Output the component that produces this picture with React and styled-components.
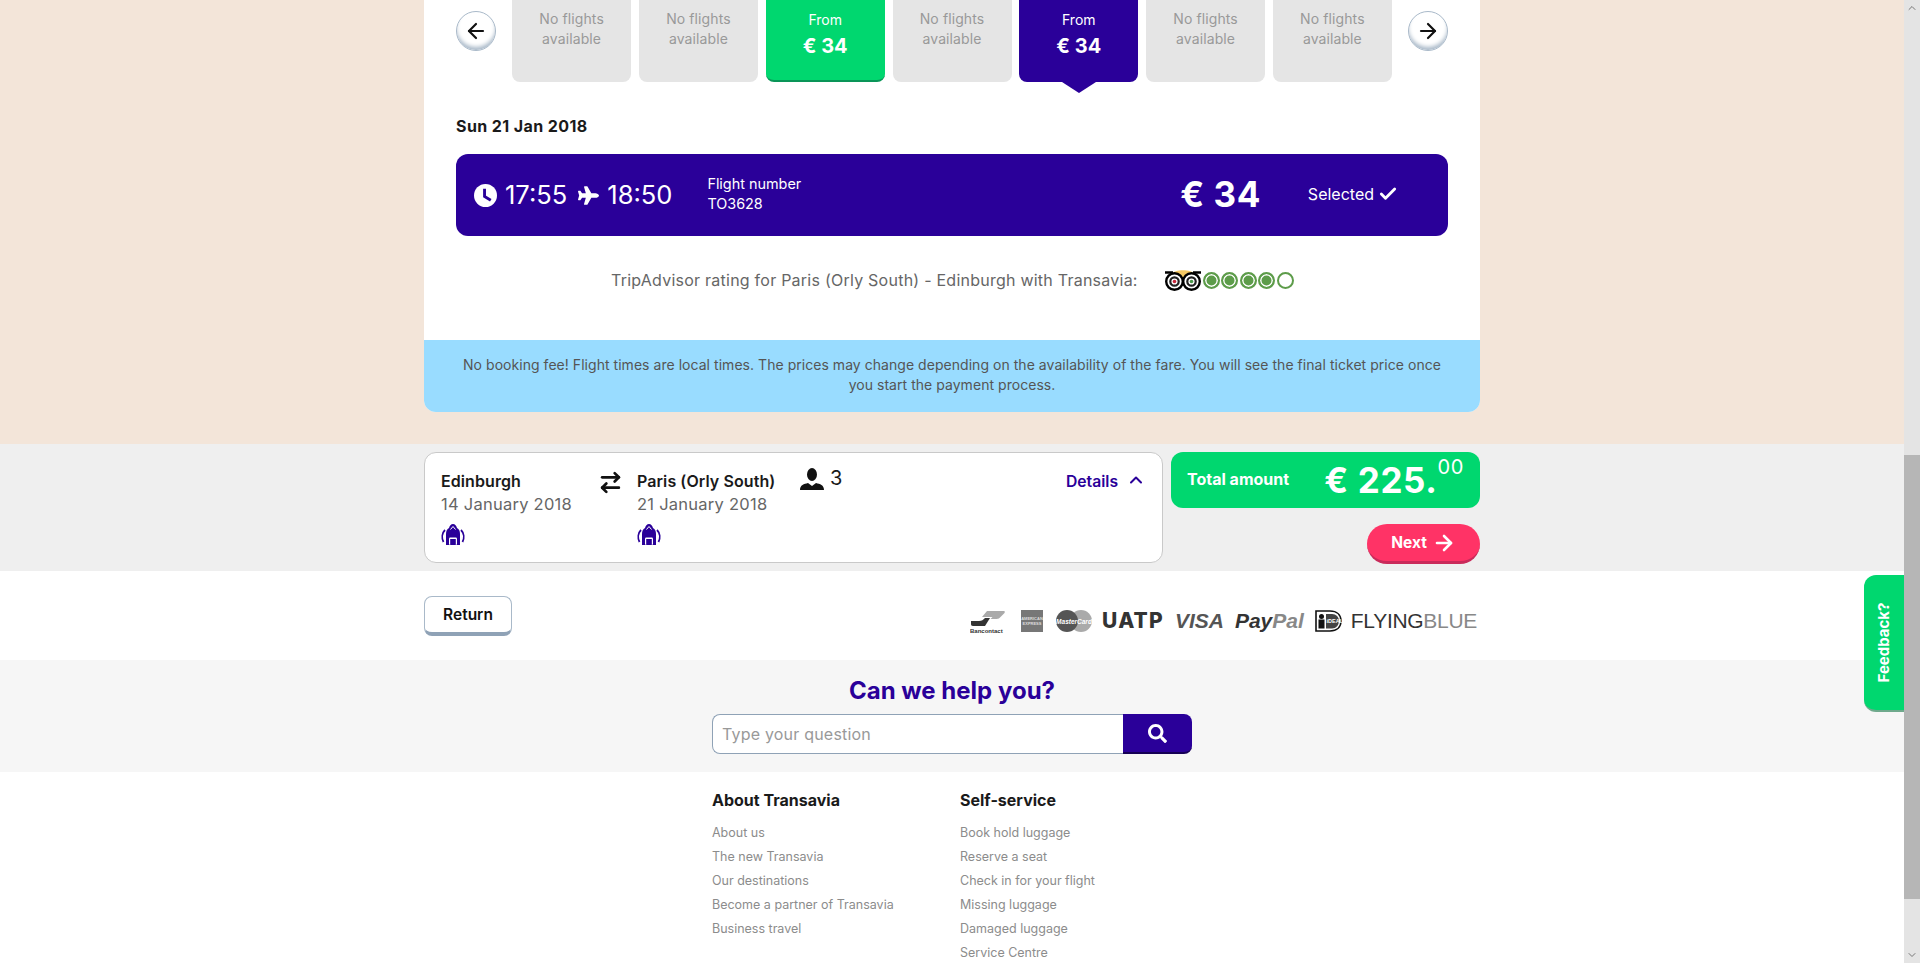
import React from "react";
import styled, { createGlobalStyle } from "styled-components";
import { ArrowLeft, ArrowRight, Check, ChevronUp, ArrowRightLeft, ChevronDown } from "lucide-react";
import { FaPlane, FaSearch } from "react-icons/fa";

const PURPLE = "#2a0099";
const GREEN = "#00d76f";
const FONT = `"Inter", "Open Sans", sans-serif`;

const GlobalStyle = createGlobalStyle`
  html, body { margin: 0; padding: 0; height: 963px; overflow: hidden; background: #fff; }
  body { font-family: ${FONT}; color: #1a1a1a; }
  * { box-sizing: border-box; }
`;

const Shell = styled.div`
  display: flex;
  height: 963px;
  position: relative;
  overflow: hidden;
`;
const Page = styled.div`
  flex: 1;
  min-width: 0;
  display: flex;
  flex-direction: column;
  & > section { flex-shrink: 0; }
`;
const ScrollBar = styled.div`
  width: 16px;
  background: #e4e4e4;
  display: flex;
  flex-direction: column;
  align-items: center;
  color: #777;
`;
const ScrollArrow = styled.div`
  height: 16px;
  display: flex;
  align-items: center;
  justify-content: center;
`;
const ScrollTrack = styled.div`
  flex: 1;
  width: 100%;
  padding: 439px 0 48px;
  display: flex;
`;
const ScrollThumb = styled.div`
  flex: 1;
  background: #b6b6b6;
`;

const BeigeBand = styled.section`
  height: 444px;
  background: #f3e5d9;
  display: flex;
  justify-content: center;
`;
const Card = styled.div`
  width: 1056px;
  height: 412px;
  background: #fff;
  border-radius: 0 0 12px 12px;
  display: flex;
  flex-direction: column;
`;
const CardBody = styled.div`
  flex: 1;
  padding: 0 32px;
  display: flex;
  flex-direction: column;
`;
const DateRow = styled.div`
  display: flex;
  justify-content: space-between;
  align-items: flex-start;
`;
const NavButton = styled.button`
  width: 40px;
  height: 40px;
  margin-top: 11px;
  padding: 0;
  border-radius: 50%;
  border: 1px solid #a9b9c9;
  background: #fff;
  box-shadow: inset 0 -4px 4px -1px #a7b7c7;
  color: #111;
  display: flex;
  align-items: center;
  justify-content: center;
`;
const Tabs = styled.div`
  display: flex;
  gap: 7.8px;
`;
const Tab = styled.div`
  position: relative;
  width: 119px;
  height: 82px;
  border-radius: 0 0 8px 8px;
  text-align: center;
  font-size: 14px;
  line-height: 20px;
  letter-spacing: ${(p) => (p.$kind === "none" ? "0.1px" : "0")};
  padding-top: ${(p) => (p.$kind === "none" ? "9px" : "10px")};
  background: ${(p) => (p.$kind === "none" ? "#e5e5e5" : p.$kind === "green" ? GREEN : PURPLE)};
  color: ${(p) => (p.$kind === "none" ? "#999" : "#fff")};
  border-bottom: ${(p) => (p.$kind === "green" ? "2px solid #0a9558" : "none")};
  &::after {
    content: "";
    display: ${(p) => (p.$kind === "purple" ? "block" : "none")};
    position: absolute;
    left: 50%;
    bottom: -11px;
    margin-left: -17px;
    border-left: 17px solid transparent;
    border-right: 17px solid transparent;
    border-top: 11px solid ${PURPLE};
  }
`;
const TabPrice = styled.div`
  font-size: 20px;
  font-weight: 700;
  line-height: 32px;
`;
const DayTitle = styled.div`
  margin-top: 34px;
  font-size: 16px;
  font-weight: 700;
  letter-spacing: 0.4px;
  line-height: 20px;
`;
const FlightBar = styled.div`
  margin-top: 18px;
  height: 82px;
  background: ${PURPLE};
  border-radius: 12px;
  color: #fff;
  display: flex;
  align-items: center;
  padding-left: 18px;
`;
const Time = styled.span`
  font-size: 25.5px;
  margin-top: -2px;
  margin-left: ${(p) => p.$gap}px;
`;
const PlaneWrap = styled.span`
  display: flex;
  margin-left: 11px;
  margin-right: 8px;
`;
const FlightNumber = styled.div`
  margin-left: 35px;
  font-size: 14.4px;
  line-height: 20px;
  margin-top: -2px;
`;
const BarPrice = styled.div`
  margin-left: auto;
  font-size: 35px;
  font-weight: 700;
  letter-spacing: 0.5px;
  margin-top: -2px;
`;
const Selected = styled.div`
  margin-left: 47px;
  margin-right: 50px;
  font-size: 16px;
  margin-top: -2px;
  display: flex;
  align-items: center;
  gap: 4px;
`;
const RatingRow = styled.div`
  margin-top: 33px;
  padding-left: 155px;
  display: flex;
  align-items: center;
  font-size: 16px;
  letter-spacing: 0.24px;
  color: #666;
`;
const Owl = styled.svg`
  margin-left: 27px;
  margin-right: 2px;
`;
const Bubble = styled.span`
  width: 17px;
  height: 17px;
  margin-right: 1.5px;
  border-radius: 50%;
  border: 2px solid #5d9c4a;
  background: ${(p) => (p.$on ? "#5d9c4a" : "#fff")};
  box-shadow: inset 0 0 0 1.5px #fff;
`;
const Notice = styled.div`
  height: 72px;
  padding: 15px 32px 0;
  background: #99dcff;
  border-radius: 0 0 12px 12px;
  text-align: center;
  font-size: 14px;
  letter-spacing: 0.04px;
  line-height: 20px;
  color: #555;
`;

const SummaryBand = styled.section`
  height: 127px;
  background: #efefef;
  display: flex;
  justify-content: center;
  padding-top: 8px;
  gap: 8px;
`;
const SummaryBox = styled.div`
  width: 739px;
  height: 111px;
  background: #fff;
  border: 1px solid #c9c9c9;
  border-radius: 12px;
  padding: 17px 16px 0;
  display: flex;
`;
const Leg = styled.div`
  width: ${(p) => p.$w}px;
`;
const City = styled.div`
  font-size: 16px;
  font-weight: 600;
  letter-spacing: 0.08px;
  line-height: 23px;
`;
const LegDate = styled.div`
  font-size: 16.5px;
  letter-spacing: 0.25px;
  color: #666;
  line-height: 23px;
`;
const BagWrap = styled.div`
  margin-top: 8px;
  display: flex;
`;
const SwapWrap = styled.div`
  width: 39px;
  display: flex;
  color: #111;
`;
const Travellers = styled.div`
  width: 240px;
  display: flex;
  align-items: flex-start;
  gap: 6px;
  font-size: 20px;
  line-height: 20px;
  margin-top: -2px;
`;
const Details = styled.div`
  margin-left: auto;
  display: flex;
  align-items: flex-start;
  gap: 8px;
  color: ${PURPLE};
  font-size: 15.7px;
  font-weight: 600;
  line-height: 23px;
`;
const TotalColumn = styled.div`
  width: 309px;
  display: flex;
  flex-direction: column;
  align-items: flex-end;
  gap: 16px;
`;
const TotalBox = styled.div`
  width: 100%;
  height: 56px;
  background: ${GREEN};
  border-radius: 12px;
  color: #fff;
  display: flex;
  align-items: center;
  padding: 0 16px;
`;
const TotalLabel = styled.div`
  font-size: 16px;
  font-weight: 700;
  margin-top: -3px;
`;
const TotalPrice = styled.div`
  margin-left: auto;
  font-size: 35px;
  font-weight: 700;
  display: flex;
  align-items: flex-start;
  letter-spacing: 0.6px;
`;
const Cents = styled.span`
  font-size: 20px;
  font-weight: 400;
  line-height: 24px;
  margin-top: -4px;
`;
const NextButton = styled.button`
  width: 113px;
  height: 40px;
  border: none;
  border-bottom: 3px solid #c92a5a;
  border-radius: 20px;
  background: #ff3366;
  color: #fff;
  font: 700 15.5px ${FONT};
  display: flex;
  align-items: center;
  justify-content: center;
  gap: 5px;
`;

const ReturnBand = styled.section`
  height: 89px;
  background: #fff;
  display: flex;
  justify-content: center;
`;
const ReturnInner = styled.div`
  width: 1056px;
  display: flex;
  justify-content: space-between;
  align-items: flex-start;
`;
const ReturnButton = styled.button`
  margin-top: 25px;
  width: 88px;
  height: 40px;
  background: #fff;
  border: 1px solid #a9b9c9;
  border-bottom: 4px solid #8fa2b6;
  border-radius: 8px;
  font: 600 15.5px ${FONT};
  color: #111;
`;
const Logos = styled.div`
  margin-top: 38px;
  margin-right: 3px;
  height: 24px;
  display: flex;
  align-items: center;
`;
const LogoSvg = styled.svg`
  display: block;
  margin-left: ${(p) => p.$gap}px;
`;
const BrandText = styled.span`
  margin-left: ${(p) => p.$gap}px;
  font-family: ${(p) => p.$font || `"Liberation Sans", sans-serif`};
  font-size: ${(p) => p.$size}px;
  font-weight: ${(p) => p.$weight || 700};
  font-style: ${(p) => (p.$italic ? "italic" : "normal")};
  letter-spacing: ${(p) => p.$track || 0}px;
  color: ${(p) => p.$color || "#333"};
  line-height: 24px;
  white-space: nowrap;
`;
const BrandLight = styled.span`
  color: #888;
`;

const HelpBand = styled.section`
  height: 112px;
  background: #f6f6f6;
  display: flex;
  flex-direction: column;
  align-items: center;
  padding-top: 15px;
`;
const HelpTitle = styled.div`
  font-size: 24px;
  font-weight: 700;
  line-height: 32px;
  color: ${PURPLE};
`;
const SearchRow = styled.div`
  margin-top: 7px;
  width: 480px;
  height: 40px;
  display: flex;
`;
const SearchInput = styled.input`
  flex: 1;
  min-width: 0;
  border: 1px solid #8fa2b6;
  border-right: none;
  border-radius: 8px 0 0 8px;
  padding: 0 9px;
  background: #fff;
  font: 16px ${FONT};
  letter-spacing: 0.2px;
  outline: none;
  &::placeholder { color: #999; opacity: 1; }
`;
const SearchButton = styled.button`
  width: 69px;
  border: none;
  border-bottom: 2px solid #160055;
  border-radius: 0 8px 8px 0;
  background: ${PURPLE};
  color: #fff;
  display: flex;
  align-items: center;
  justify-content: center;
`;

const Footer = styled.footer`
  flex: 1;
  min-height: 0;
  overflow: hidden;
  background: #fff;
  padding: 18px 0 0 712px;
  display: flex;
`;
const FooterColumn = styled.div`
  width: 248px;
`;
const FooterTitle = styled.div`
  font-size: 16px;
  font-weight: 700;
  line-height: 20px;
  margin-bottom: 11px;
`;
const FooterLink = styled.div`
  font-size: 12.5px;
  line-height: 24px;
  color: #8c8c8c;
`;

const FeedbackTab = styled.div`
  position: absolute;
  right: 16px;
  top: 575px;
  width: 40px;
  height: 137px;
  background: ${GREEN};
  border-radius: 12px 0 0 12px;
  border-bottom: 2px solid #6fa98c;
  color: #fff;
  font-size: 15px;
  font-weight: 700;
  display: flex;
  align-items: center;
  justify-content: center;
`;
const FeedbackLabel = styled.span`
  transform: rotate(-90deg);
  white-space: nowrap;
`;

const tabs = [
  { kind: "none" },
  { kind: "none" },
  { kind: "green" },
  { kind: "none" },
  { kind: "purple" },
  { kind: "none" },
  { kind: "none" },
];

const aboutLinks = ["About us", "The new Transavia", "Our destinations", "Become a partner of Transavia", "Business travel"];
const serviceLinks = ["Book hold luggage", "Reserve a seat", "Check in for your flight", "Missing luggage", "Damaged luggage", "Service Centre"];

const ClockIcon = () => (
  <svg width="23" height="23" viewBox="0 0 24 24">
    <circle cx="12" cy="12" r="12" fill="#fff" />
    <path d="M11 5v8l6.500 4" fill="none" stroke={PURPLE} strokeWidth="3" />
  </svg>
);

const BagIcon = () => (
  <svg width="24" height="22" viewBox="0 0 24 22">
    <path d="M12 0c-2 0-3.500 2-4 4C6 5 5 7 5 10v11h14V10c0-3-1-5-3-6-.5-2-2-4-4-4z" fill={PURPLE} />
    <path d="M4 6C1 9 .5 14 2.500 18M20 6c3 3 3.500 8 1.500 12" fill="none" stroke={PURPLE} strokeWidth="1.800" />
    <path d="M9.500 5.500 12 2.500l2.500 3" fill="none" stroke="#fff" strokeWidth="1" />
    <rect x="8" y="13.500" width="8" height="7.500" rx="1.200" fill="#fff" />
    <rect x="9.200" y="15" width="5.600" height="6" fill={PURPLE} />
  </svg>
);

const PersonIcon = () => (
  <svg width="24" height="22" viewBox="0 0 24 22">
    <ellipse cx="12" cy="6.500" rx="5" ry="6.500" fill="#111" />
    <path d="M0 22c0-5 4-6 8-7l4 3 4-3c4 1 8 2 8 7z" fill="#111" />
  </svg>
);

const OwlIcon = () => (
  <Owl width="36" height="22" viewBox="0 0 36 22">
    <path d="M6 5C10 0 26 0 30 5l-12 9z" fill="#f5c965" />
    <path d="M0 3.500h8M28 3.500h8" stroke="#000" strokeWidth="2.400" />
    <circle cx="9.500" cy="12.500" r="8.300" fill="#fff" stroke="#000" strokeWidth="2.400" />
    <circle cx="26.500" cy="12.500" r="8.300" fill="#fff" stroke="#000" strokeWidth="2.400" />
    <circle cx="9.500" cy="12.500" r="4.200" fill="#fff" stroke="#222" strokeWidth="2.200" />
    <circle cx="26.500" cy="12.500" r="4.200" fill="#fff" stroke="#222" strokeWidth="2.200" />
    <circle cx="9.500" cy="12.500" r="1.800" fill="#c8283c" />
    <circle cx="26.500" cy="12.500" r="1.800" fill="#4c9a4c" />
  </Owl>
);

const BancontactLogo = () => (
  <LogoSvg width="36" height="23" viewBox="0 0 36 23" $gap={0}>
    <path d="M1 11h8c3 0 4-1 6-3h5l-5 8H3c-1.500 0-2-1-2-2z" fill="#333" />
    <path d="M12 7 17 1h17c1 0 1 1 .5 2l-4 4c-1 1-2 2-4 2h-6l2-2z" fill="#aaa" />
    <text x="0" y="22.500" fontSize="6" fontWeight="700" fontFamily="Liberation Sans Narrow, Liberation Sans, sans-serif" fill="#333">Bancontact</text>
  </LogoSvg>
);

const AmexLogo = () => (
  <LogoSvg width="22" height="22" viewBox="0 0 22 22" $gap={15}>
    <rect width="22" height="22" fill="#777" />
    <text x="11" y="10" textAnchor="middle" fontSize="4" fontWeight="700" fontFamily="Liberation Sans, sans-serif" fill="#ddd">AMERICAN</text>
    <text x="11" y="15" textAnchor="middle" fontSize="4" fontWeight="700" fontFamily="Liberation Sans, sans-serif" fill="#ddd">EXPRESS</text>
  </LogoSvg>
);

const MasterLogo = () => (
  <LogoSvg width="36" height="22" viewBox="0 0 36 22" $gap={13}>
    <circle cx="25" cy="11" r="11" fill="#aaa" />
    <circle cx="11" cy="11" r="11" fill="#555" />
    <text x="18" y="13.500" textAnchor="middle" fontSize="6.500" fontWeight="700" fontStyle="italic" fontFamily="Liberation Sans, sans-serif" fill="#fff">MasterCard</text>
  </LogoSvg>
);

const IdealLogo = () => (
  <LogoSvg width="27" height="22" viewBox="0 0 27 22" $gap={11}>
    <path d="M1 1h14c7 0 11 4 11 10s-4 10-11 10H1z" fill="#fff" stroke="#111" strokeWidth="1.600" />
    <rect x="3.500" y="9.500" width="6" height="9" fill="#111" />
    <circle cx="6.500" cy="6.500" r="2.500" fill="#111" />
    <path d="M11 4h6c4 0 7 3 7 7s-3 7.500-7 7.500h-6z" fill="#444" />
    <text x="11.500" y="13" fontSize="5.500" fontWeight="700" fontFamily="Liberation Sans, sans-serif" fill="#fff">iDEAL</text>
  </LogoSvg>
);

export default function App() {
  return (
    <Shell>
      <GlobalStyle />
      <Page>
        <BeigeBand>
          <Card>
            <CardBody>
              <DateRow>
                <NavButton><ArrowLeft size={24} strokeWidth={2.2} /></NavButton>
                <Tabs>
                  {tabs.map((t, i) => (
                    <Tab key={i} $kind={t.kind}>
                      {t.kind === "none" ? (
                        <>No flights<br />available</>
                      ) : (
                        <>From<TabPrice>€ 34</TabPrice></>
                      )}
                    </Tab>
                  ))}
                </Tabs>
                <NavButton><ArrowRight size={24} strokeWidth={2.2} /></NavButton>
              </DateRow>
              <DayTitle>Sun 21 Jan 2018</DayTitle>
              <FlightBar>
                <ClockIcon />
                <Time $gap={8}>17:55</Time>
                <PlaneWrap><FaPlane size={21} /></PlaneWrap>
                <Time $gap={0}>18:50</Time>
                <FlightNumber>Flight number<br />TO3628</FlightNumber>
                <BarPrice>€ 34</BarPrice>
                <Selected>Selected <Check size={20} strokeWidth={3.4} /></Selected>
              </FlightBar>
              <RatingRow>
                TripAdvisor rating for Paris (Orly South) - Edinburgh with Transavia:
                <OwlIcon />
                {[1, 1, 1, 1, 0].map((on, i) => <Bubble key={i} $on={on} />)}
              </RatingRow>
            </CardBody>
            <Notice>
              No booking fee! Flight times are local times. The prices may change depending on the availability of the fare. You will see the final ticket price once you start the payment process.
            </Notice>
          </Card>
        </BeigeBand>

        <SummaryBand>
          <SummaryBox>
            <Leg $w={157}>
              <City>Edinburgh</City>
              <LegDate>14 January 2018</LegDate>
              <BagWrap><BagIcon /></BagWrap>
            </Leg>
            <SwapWrap><ArrowRightLeft size={25} strokeWidth={2.6} /></SwapWrap>
            <Leg $w={163}>
              <City>Paris (Orly South)</City>
              <LegDate>21 January 2018</LegDate>
              <BagWrap><BagIcon /></BagWrap>
            </Leg>
            <Travellers><PersonIcon />3</Travellers>
            <Details>Details <ChevronUp size={20} strokeWidth={2.4} /></Details>
          </SummaryBox>
          <TotalColumn>
            <TotalBox>
              <TotalLabel>Total amount</TotalLabel>
              <TotalPrice>€ 225.<Cents>00</Cents></TotalPrice>
            </TotalBox>
            <NextButton>Next <ArrowRight size={24} strokeWidth={2.6} /></NextButton>
          </TotalColumn>
        </SummaryBand>

        <ReturnBand>
          <ReturnInner>
            <ReturnButton>Return</ReturnButton>
            <Logos>
              <BancontactLogo />
              <AmexLogo />
              <MasterLogo />
              <BrandText $gap={10} $size={21} $weight={800} $track={1.2} $font={`"Inter", sans-serif`}>UATP</BrandText>
              <BrandText $gap={11} $size={21} $italic $color="#555">VISA</BrandText>
              <BrandText $gap={11} $size={21} $italic>Pay<BrandLight>Pal</BrandLight></BrandText>
              <IdealLogo />
              <BrandText $gap={9} $size={21} $weight={400} $track={-0.3}>FLYING<BrandLight>BLUE</BrandLight></BrandText>
            </Logos>
          </ReturnInner>
        </ReturnBand>

        <HelpBand>
          <HelpTitle>Can we help you?</HelpTitle>
          <SearchRow>
            <SearchInput placeholder="Type your question" readOnly />
            <SearchButton><FaSearch size={19} /></SearchButton>
          </SearchRow>
        </HelpBand>

        <Footer>
          <FooterColumn>
            <FooterTitle>About Transavia</FooterTitle>
            {aboutLinks.map((l) => <FooterLink key={l}>{l}</FooterLink>)}
          </FooterColumn>
          <FooterColumn>
            <FooterTitle>Self-service</FooterTitle>
            {serviceLinks.map((l) => <FooterLink key={l}>{l}</FooterLink>)}
          </FooterColumn>
        </Footer>
      </Page>
      <ScrollBar>
        <ScrollArrow><ChevronUp size={12} /></ScrollArrow>
        <ScrollTrack><ScrollThumb /></ScrollTrack>
        <ScrollArrow><ChevronDown size={12} /></ScrollArrow>
      </ScrollBar>
      <FeedbackTab><FeedbackLabel>Feedback?</FeedbackLabel></FeedbackTab>
    </Shell>
  );
}
